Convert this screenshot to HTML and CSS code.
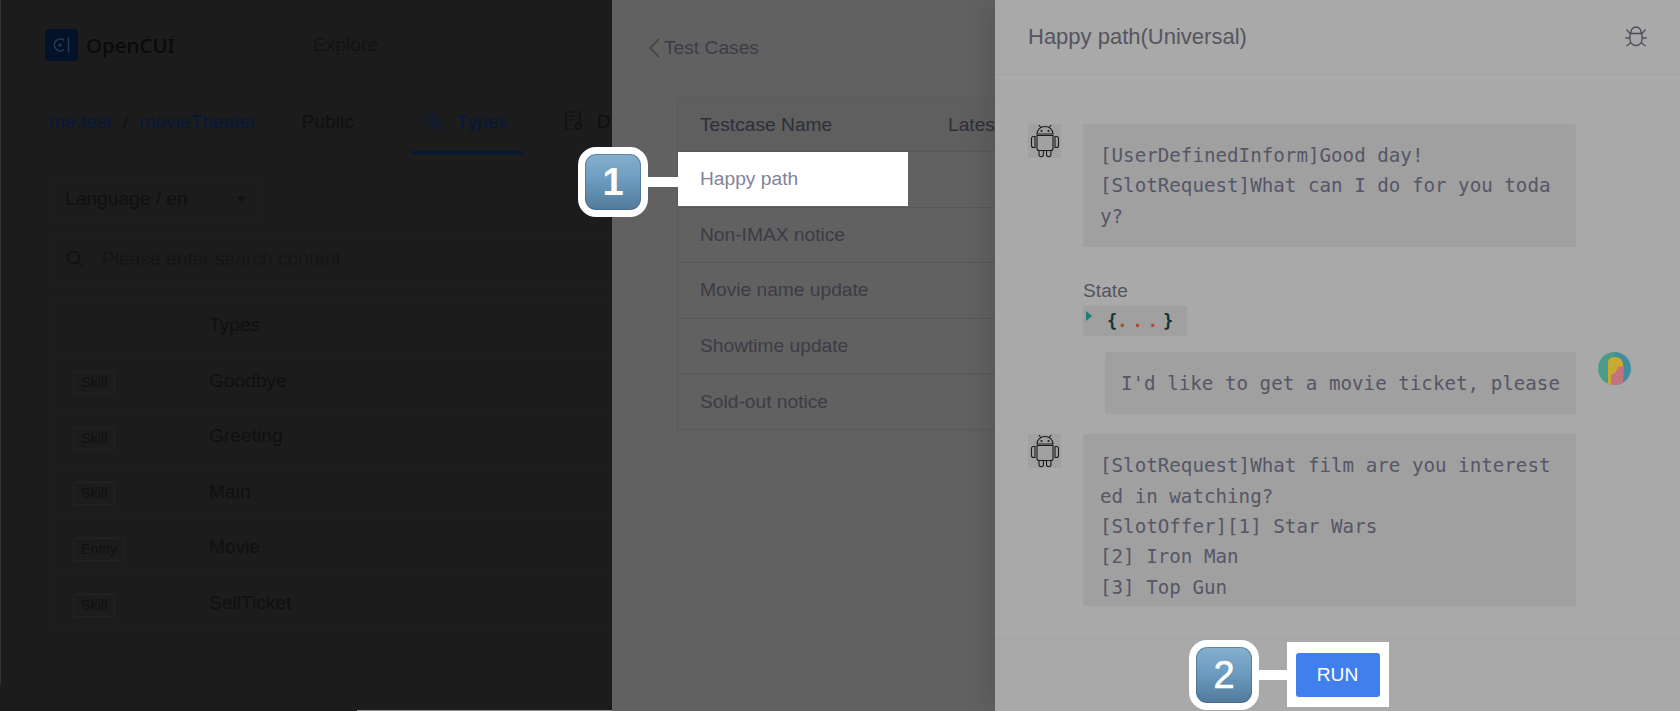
FILE: index.html
```html
<!DOCTYPE html>
<html lang="en">
<head>
  <meta charset="UTF-8" />
  <meta name="viewport" content="width=device-width, initial-scale=1.0"/>
  <title>OpenCUI Test Cases</title>
  <link rel="stylesheet" href="styles.css">
</head>
<body>
  <div class="page">
    <div class="left-pane">
      <div class="topbar">
        <div class="brand">
          <svg class="logo" viewBox="0 0 33 32">
            <rect width="33" height="32" rx="4" fill="#041229"/>
            <path d="M19 11.200a6 6 0 1 0 0 9.600" fill="none" stroke="#2c3c55" stroke-width="1.400"/>
            <circle cx="15" cy="16" r="1.600" fill="#2c3c55"/>
            <path d="M23.500 8.500v15" stroke="#2c3c55" stroke-width="1.400"/>
          </svg>
          <span class="brand-name">OpenCUI</span>
        </div>
        <span class="top-link">Explore</span>
      </div>
      <div class="subnav">
        <span class="crumb">me.test</span>
        <span class="crumb-sep">/</span>
        <span class="crumb">movieTheater</span>
        <span class="visibility">Public</span>
        <span class="tab tab-active">
          <svg class="tab-icon" viewBox="0 0 16 16" fill="none" stroke="#0a1f44" stroke-width="1.100">
            <rect x="1" y="1" width="9" height="9"/><rect x="6" y="6" width="9" height="9"/>
          </svg>
          Types
        </span>
        <span class="tab">
          <svg class="tab-icon doc" viewBox="0 0 18 19" fill="none" stroke="#0e0e0e" stroke-width="1.200">
            <path d="M9 18H1V1h14v10M4 5h8M4 9h5"/><circle cx="13.500" cy="15" r="3"/>
          </svg>
          D
        </span>
      </div>
      <div class="lang-select">
        <span>Language / en</span>
        <span class="caret"></span>
      </div>
      <div class="search-box">
        <svg class="search-icon" viewBox="0 0 18 18" fill="none" stroke="#111" stroke-width="1.400">
          <circle cx="7.500" cy="7.500" r="6"/><path d="M12 12l5 5"/>
        </svg>
        <span class="placeholder">Please enter search content</span>
      </div>
      <div class="type-table">
        <div class="type-row"><span></span><span>Types</span></div>
        <div class="type-row"><span><i class="tag">Skill</i></span><span>Goodbye</span></div>
        <div class="type-row"><span><i class="tag">Skill</i></span><span>Greeting</span></div>
        <div class="type-row"><span><i class="tag">Skill</i></span><span>Main</span></div>
        <div class="type-row"><span><i class="tag">Entity</i></span><span>Movie</span></div>
        <div class="type-row"><span><i class="tag">Skill</i></span><span>SellTicket</span></div>
      </div>
    </div>

    <div class="mid-pane">
      <div class="back-link">
        <svg class="chevron" viewBox="0 0 12 20" fill="none" stroke="#3c3c3c" stroke-width="1.300"><path d="M11 1L2 10l9 9"/></svg>
        <span>Test Cases</span>
      </div>
      <div class="case-table">
        <div class="case-row case-head"><span class="case-name">Testcase Name</span><span>Lates</span></div>
        <div class="case-row"><span class="case-name case-picked">Happy path</span></div>
        <div class="case-row"><span class="case-name">Non-IMAX notice</span></div>
        <div class="case-row"><span class="case-name">Movie name update</span></div>
        <div class="case-row"><span class="case-name">Showtime update</span></div>
        <div class="case-row"><span class="case-name">Sold-out notice</span></div>
      </div>
    </div>

    <div class="right-pane">
      <div class="drawer-head">
        <span class="drawer-title">Happy path(Universal)</span>
        <svg class="bug" viewBox="0 0 22 22" fill="none" stroke="#4c4c58" stroke-width="1.300">
          <path d="M6 7.500V6a5 5 0 0 1 10 0v1.500M5 7.500h12v6a6 6 0 0 1-12 0zM1.500 3.500L5 7.500M20.500 3.500L17 7.500M.5 12H5M17 12h4.500M1.500 20L6 16.500M20.500 20L16 16.500"/>
        </svg>
      </div>
      <div class="chat">
        <div class="msg">
          <svg class="bot" viewBox="0 0 33 34" fill="none" stroke="#1b1b1b" stroke-width="1.100">
            <path d="M11 1l2 3M23 1l-2 3M9 10a8 7.500 0 0 1 16 0zM9 11.500h16v13a2 2 0 0 1-2 2H11a2 2 0 0 1-2-2zM7 12.500v11H5.500a2 2 0 0 1-2-2v-7a2 2 0 0 1 2-2zM27 12.500v11h1.500a2 2 0 0 0 2-2v-7a2 2 0 0 0-2-2zM11 26.500v4a2.200 2.200 0 0 0 4.400 0v-4M18.500 26.500v4a2.200 2.200 0 0 0 4.400 0v-4"/>
            <circle cx="13.500" cy="7" r=".5"/><circle cx="20.500" cy="7" r=".5"/>
          </svg>
          <div class="bubble">[UserDefinedInform]Good day!
[SlotRequest]What can I do for you today?</div>
        </div>
        <div class="state">
          <div class="state-label">State</div>
          <div class="state-json">
            <span class="arrow"></span>
            <code><b class="brace">{</b><b class="dots">...</b><b class="brace">}</b></code>
          </div>
        </div>
        <div class="msg msg-user">
          <div class="bubble bubble-user">I'd like to get a movie ticket, please</div>
          <svg class="avatar" viewBox="0 0 33 33">
            <defs><clipPath id="round"><circle cx="16.500" cy="16.500" r="16.500"/></clipPath></defs>
            <g clip-path="url(#round)">
              <rect width="17" height="33" fill="#4c9a8a"/>
              <rect x="17" width="16" height="33" fill="#3d8d9e"/>
              <path d="M10 33V11c0-4 3-6 7-6s7 2 8 6v4l-7 5-3 13z" fill="#c9a92f"/>
              <path d="M13 33v-10l5-3 2-5 6-1-1 19z" fill="#c4727f"/>
            </g>
          </svg>
        </div>
        <div class="msg msg-last">
          <svg class="bot" viewBox="0 0 33 34" fill="none" stroke="#1b1b1b" stroke-width="1.100">
            <path d="M11 1l2 3M23 1l-2 3M9 10a8 7.500 0 0 1 16 0zM9 11.500h16v13a2 2 0 0 1-2 2H11a2 2 0 0 1-2-2zM7 12.500v11H5.500a2 2 0 0 1-2-2v-7a2 2 0 0 1 2-2zM27 12.500v11h1.500a2 2 0 0 0 2-2v-7a2 2 0 0 0-2-2zM11 26.500v4a2.200 2.200 0 0 0 4.400 0v-4M18.500 26.500v4a2.200 2.200 0 0 0 4.400 0v-4"/>
            <circle cx="13.500" cy="7" r=".5"/><circle cx="20.500" cy="7" r=".5"/>
          </svg>
          <div class="bubble bubble-long">[SlotRequest]What film are you interested in watching?
[SlotOffer][1] Star Wars
[2] Iron Man
[3] Top Gun</div>
        </div>
      </div>
      <div class="drawer-foot">
        <div class="run-mark"><button class="run-btn">RUN</button></div>
      </div>
    </div>

    <div class="step step-one">1</div>
    <div class="step step-two">2</div>
  </div>
</body>
</html>
```

FILE: styles.css
```css
* {
  box-sizing: border-box;
}
body {
  margin: 0;
  font-family: "Liberation Sans", Arial, sans-serif;
  font-size: 19.2px;
}
.page {
  position: relative;
  display: flex;
  width: 1680px;
  height: 711px;
  overflow: hidden;
}

/* left pane, behind the darkest overlay */
.left-pane {
  position: relative;
  flex: none;
  width: 612px;
  background: #1c1c1c;
  color: #101010;
  overflow: hidden;
}
.left-pane::before {
  content: "";
  position: absolute;
  left: 0;
  top: 0;
  width: 1px;
  height: 685px;
  background: #333;
}
.left-pane::after {
  content: "";
  position: absolute;
  left: 357px;
  right: 0;
  bottom: 0;
  height: 1px;
  background: #8c8c8c;
}
.topbar {
  display: flex;
  align-items: center;
  height: 90px;
  padding-left: 45px;
}
.brand {
  display: flex;
  align-items: center;
  gap: 8px;
  width: 268px;
}
.logo {
  width: 33px;
  height: 32px;
}
.brand-name {
  font-family: "Noto Sans", sans-serif;
  font-size: 20.500px;
  font-weight: 500;
  color: #0a0a0a;
}
.top-link {
  color: #131313;
}
.subnav {
  display: flex;
  align-items: flex-start;
  height: 64px;
  padding: 21px 0 0 49px;
  white-space: nowrap;
}
.subnav > span {
  flex: none;
}
.crumb {
  color: #06183a;
}
.crumb-sep {
  margin: 0 11px;
  color: #131313;
}
.visibility {
  margin-left: 45px;
}
.tab {
  display: flex;
  align-items: flex-start;
  height: 43px;
  margin-left: 27px;
  padding-left: 15px;
  gap: 14px;
}
.tab-active {
  width: 112px;
  margin-left: 57px;
  gap: 15px;
  color: #06183a;
  border-bottom: 3px solid #06183a;
}
.tab-icon {
  width: 16px;
  height: 16px;
  margin-top: 2px;
}
.tab-icon.doc {
  width: 18px;
  height: 19px;
  margin-top: 0;
}
.lang-select {
  display: flex;
  align-items: center;
  justify-content: space-between;
  width: 213px;
  height: 42px;
  margin: 24px 0 0 50px;
  padding: 0 16px 0 14px;
  border: 1px solid #1f1f1f;
  border-radius: 2px;
}
.caret {
  border-left: 5px solid transparent;
  border-right: 5px solid transparent;
  border-top: 6px solid #131313;
}
.search-box {
  display: flex;
  align-items: center;
  gap: 18px;
  height: 53px;
  margin: 12px 0 0 50px;
  padding-left: 15px;
  border: 1px solid #1f1f1f;
  border-right: 0;
}
.search-icon {
  width: 18px;
  height: 18px;
}
.placeholder {
  color: #151515;
}
.type-table {
  margin: 12px 0 0 50px;
  border: 1px solid #1f1f1f;
  border-right: 0;
}
.type-row {
  display: grid;
  grid-template-columns: 158px 1fr;
  align-items: center;
  height: 55.5px;
  border-bottom: 1px solid #1f1f1f;
}
.type-row:last-child {
  border-bottom: 0;
}
.tag {
  display: inline-block;
  margin: 4px 0 0 22px;
  padding: 0 7px;
  height: 23px;
  line-height: 21px;
  font-style: normal;
  font-size: 14.400px;
  border: 1px solid #232323;
  border-radius: 2px;
}

/* middle pane */
.mid-pane {
  flex: none;
  width: 383px;
  background: #616161;
  color: #3c3c46;
  overflow: hidden;
}
.back-link {
  display: flex;
  align-items: center;
  gap: 4px;
  height: 97px;
  padding: 0 0 2px 36px;
  white-space: nowrap;
}
.chevron {
  width: 12px;
  height: 20px;
}
.case-table {
  width: 400px;
  margin-left: 65px;
  border: 1px solid #5a5a5a;
  border-right: 0;
}
.case-row {
  display: flex;
  align-items: stretch;
  height: 55.400px;
  border-bottom: 1px solid #595959;
  white-space: nowrap;
}
.case-row:last-child {
  border-bottom: 0;
}
.case-head {
  height: 54.400px;
  color: #2e2e3a;
  align-items: center;
  background: #5f5f5f;
}
.case-name {
  display: flex;
  align-items: center;
  width: 270px;
  padding-left: 22px;
}
.case-picked {
  width: 230px;
  height: 54px;
  background: #fff;
  color: #82829c;
}

/* right pane */
.right-pane {
  display: flex;
  flex: 1;
  flex-direction: column;
  background: #a9a9a9;
  color: #55555f;
  box-shadow: -8px 0 24px rgba(0, 0, 0, 0.1);
}
.drawer-head {
  display: flex;
  flex: none;
  align-items: center;
  justify-content: space-between;
  height: 75px;
  padding: 0 33px 0 33px;
  border-bottom: 1px solid #a2a2a2;
}
.drawer-title {
  font-size: 22px;
}
.bug {
  width: 22px;
  height: 22px;
}
.chat {
  flex: 1;
  padding: 49px 49px 0 33px;
  overflow: hidden;
}
.msg {
  display: flex;
  align-items: flex-start;
  gap: 22px;
}
.msg-user {
  justify-content: flex-end;
  margin-top: 16px;
}
.msg-last {
  margin-top: 20px;
}
.bot {
  flex: none;
  width: 33px;
  height: 34px;
  background: #a1a1a1;
}
.avatar {
  flex: none;
  width: 33px;
  height: 33px;
}
.bubble {
  width: 493px;
  padding: 17px 18px 15px 17px;
  background: #a0a0a0;
  border-radius: 2px;
  font-family: "DejaVu Sans Mono", monospace;
  font-size: 19.200px;
  line-height: 30.400px;
  white-space: pre-wrap;
  word-break: break-all;
  color: #565666;
}
.bubble-user {
  width: 471px;
  height: 62px;
  padding: 17px 16px 15px;
  line-height: 30px;
  white-space: nowrap;
}
.bubble-long {
  height: 172px;
}
.state {
  margin: 28px 0 0 55px;
}
.state-label {
  height: 31px;
  padding-top: 1px;
  line-height: 30px;
}
.state-json {
  position: relative;
  display: flex;
  align-items: center;
  width: 104px;
  height: 30px;
  padding-left: 24px;
  background: #a0a0a0;
}
.arrow {
  position: absolute;
  left: 3px;
  top: 5px;
  border-top: 5px solid transparent;
  border-bottom: 5px solid transparent;
  border-left: 6px solid #1d7f72;
}
.state-json code {
  font-family: "DejaVu Sans Mono", monospace;
  font-size: 17px;
}
.brace {
  color: #12343b;
}
.dots {
  margin: 0;
  letter-spacing: 5px;
  color: #b2491c;
}
.drawer-foot {
  display: flex;
  flex: none;
  justify-content: center;
  height: 73px;
  padding-top: 3px;
  border-top: 1px solid #a2a2a2;
}
.run-mark {
  width: 102px;
  height: 65px;
  padding: 11px 9px 10px;
  background: #fff;
}
.run-btn {
  display: block;
  width: 84px;
  height: 44px;
  padding: 0;
  border: 0;
  border-radius: 3px;
  background: #4180ec;
  color: #fff;
  font-family: inherit;
  font-size: 19.200px;
}

/* numbered step badges laid over the page */
.step {
  position: absolute;
  width: 70px;
  height: 70px;
  border: 7px solid #fff;
  border-radius: 18px;
  background: linear-gradient(#86b0cd, #6c9cc0 45%, #527a9a);
  box-shadow: inset 0 0 0 1px rgba(60, 90, 120, 0.5);
  color: #fff;
  font-size: 38px;
  font-weight: bold;
  line-height: 56px;
  text-align: center;
}
.step::after {
  content: "";
  position: absolute;
  left: 63px;
  top: 23px;
  height: 10px;
  background: #fff;
}
.step-one {
  left: 578px;
  top: 147px;
}
.step-one::after {
  width: 30px;
}
.step-two {
  left: 1189px;
  top: 640px;
  font-weight: normal;
  -webkit-text-stroke: 0.6px #fff;
}
.step-two::after {
  width: 28px;
}
```
